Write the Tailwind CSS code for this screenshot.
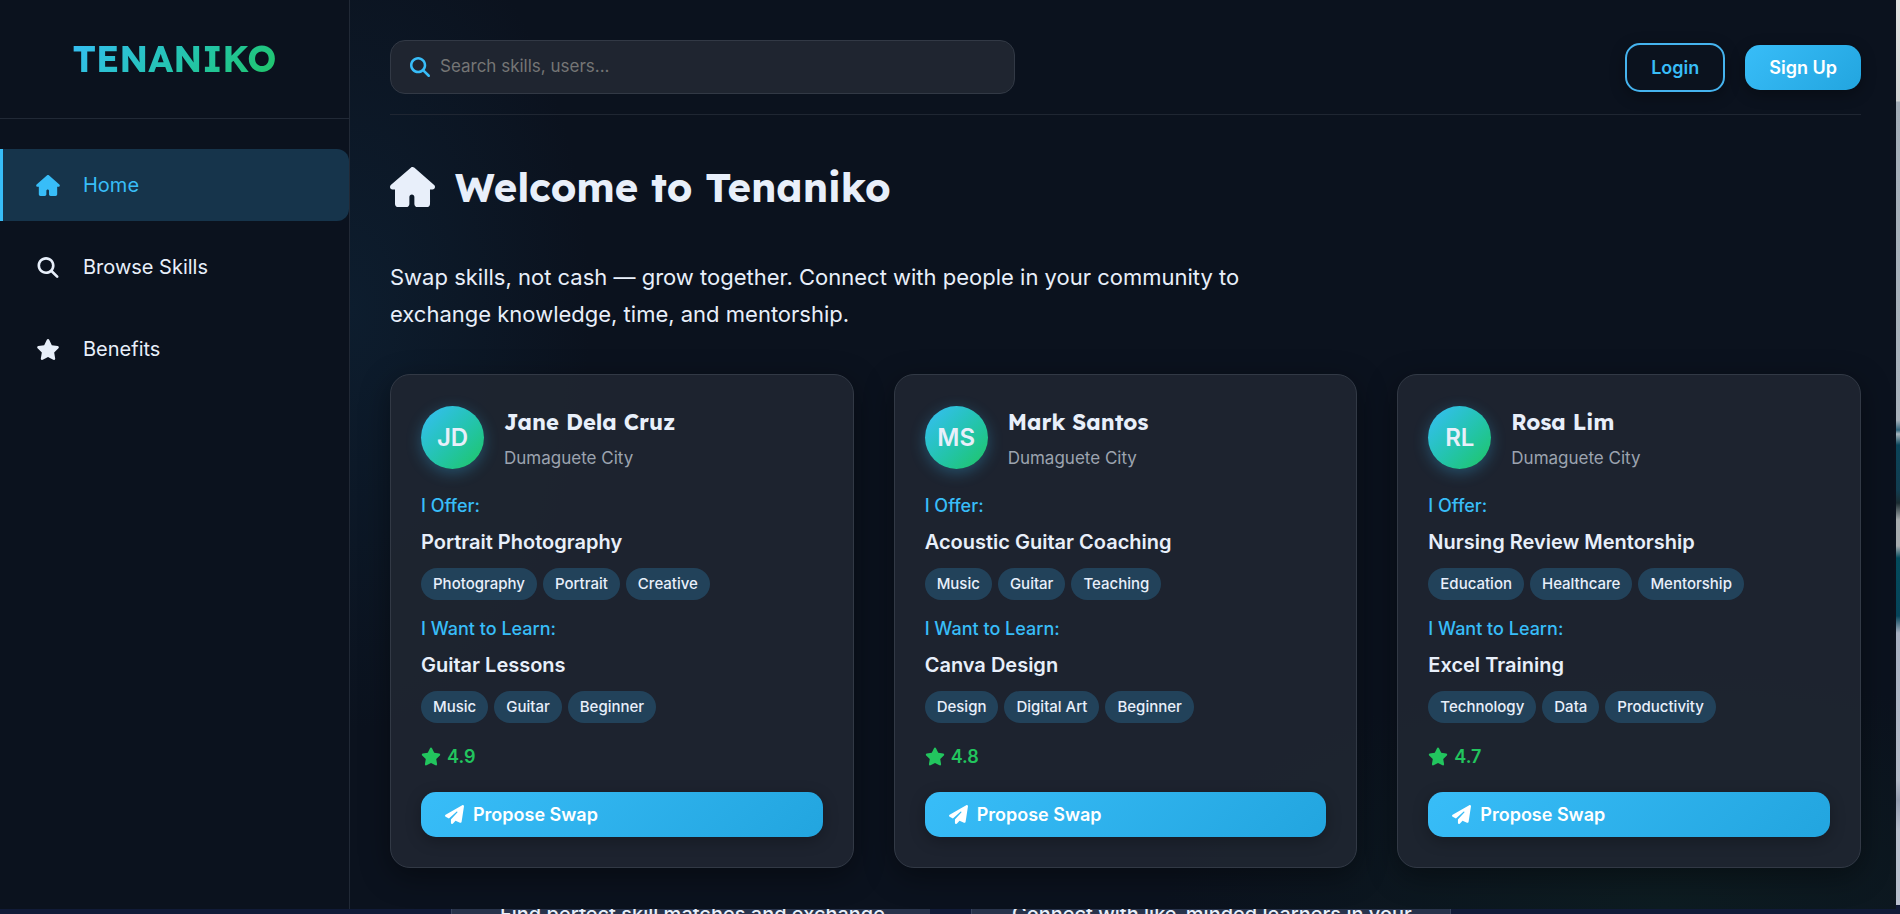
<!DOCTYPE html>
<html lang="en">
<head>
<meta charset="utf-8">
<meta name="viewport" content="width=device-width, initial-scale=1">
<title>Tenaniko</title>
<script src="https://cdn.jsdelivr.net/npm/@tailwindcss/browser@4"></script>
</head>
<body class="h-screen overflow-hidden bg-[#111b38] font-['Inter',sans-serif] text-[#e8effa]">
<svg class="hidden">
  <symbol id="home" viewBox="0 0 576 512"><path d="M575.8 255.5c0 18-15 32.1-32 32.1h-32l.7 160.2c0 2.700-.2 5.400-.5 8.100V472c0 22.100-17.900 40-40 40H352c-22.100 0-40-17.900-40-40v-88c0-17.700-14.300-32-32-32h16-16c-17.700 0-32 14.300-32 32v88c0 22.100-17.900 40-40 40H104c-22.100 0-40-17.900-40-40V287.600H32c-18 0-32-14-32-32.100 0-9 3-17 10-24L266.400 8c7-7 15-8 22-8s15 2 21 7l255.400 224.500c8 7 12 15 11 24z"/></symbol>
  <symbol id="search" viewBox="0 0 512 512"><path d="M416 208c0 45.900-14.900 88.300-40 122.700L502.600 457.400c12.500 12.500 12.500 32.800 0 45.300s-32.800 12.500-45.300 0L330.700 376c-34.400 25.200-76.800 40-122.700 40C93.100 416 0 322.900 0 208S93.100 0 208 0s208 93.100 208 208zM208 352a144 144 0 1 0 0-288 144 144 0 1 0 0 288z"/></symbol>
  <symbol id="star" viewBox="0 0 576 512"><path d="M316.900 18C311.600 7 300.400 0 288.100 0s-23.400 7-28.800 18L195 150.300 51.400 171.500c-12 1.800-22 10.200-25.700 21.700s-.7 24.200 7.900 32.700L137.800 329 113.200 474.700c-2 12 3 24.200 12.900 31.300s23 8 33.800 2.300l128.300-68.500 128.300 68.500c10.800 5.700 23.900 4.900 33.800-2.300s14.900-19.300 12.900-31.300L438.500 329 542.700 225.900c8.600-8.500 11.700-21.200 7.900-32.700s-13.700-19.900-25.700-21.700L381.200 150.300 316.900 18z"/></symbol>
  <symbol id="plane" viewBox="0 0 512 512"><path d="M498.100 5.600c10.100 7 15.400 19.100 13.500 31.200l-64 416c-1.500 9.700-7.400 18.200-16 23s-18.900 5.400-28 1.600L284 427.700l-68.500 74.100c-8.900 9.700-22.900 12.900-35.200 8.100S160 493.200 160 480v-83.600c0-4 1.500-7.800 4.200-10.700l167.600-182.900c5.800-6.300 5.600-16-.4-22s-15.700-6.400-22-.7L106 360.800 17.700 316.600C7.100 311.300.3 300.700 0 288.900s5.900-22.800 16.100-28.700l448-256c10.700-6.100 23.900-5.500 34 1.400z"/></symbol>
</svg>

<div class="flex h-full flex-col">
  <div class="flex min-h-0 flex-1">
    <aside class="w-[350px] shrink-0 border-r border-[#212936] bg-[#0b121e]">
      <div class="flex h-[119px] items-center justify-center border-b border-[#212936]">
        <a href="#" class="bg-linear-135 from-[#38bdf8] to-[#22c55e] bg-clip-text font-['Lexend','Inter',sans-serif] text-[36px] font-bold text-transparent">TENANIKO</a>
      </div>
      <nav class="flex flex-col gap-[10px] pt-[30px] text-[20px]">
        <a href="#" class="flex h-[72px] items-center gap-[23px] rounded-r-xl border-l-[3px] border-[#38bdf8] bg-[#16344b] pl-[33px] text-[#38bdf8]">
          <svg class="h-[21px] w-6 fill-current"><use href="#home"/></svg>Home</a>
        <a href="#" class="flex h-[72px] items-center gap-[23px] rounded-r-xl border-l-[3px] border-transparent pl-[33px]">
          <svg class="h-[21px] w-6 fill-current"><use href="#search"/></svg>Browse Skills</a>
        <a href="#" class="flex h-[72px] items-center gap-[23px] rounded-r-xl border-l-[3px] border-transparent pl-[33px]">
          <svg class="h-[21px] w-6 fill-current"><use href="#star"/></svg>Benefits</a>
      </nav>
    </aside>

    <main class="min-w-0 flex-1 bg-[#0b121e] bg-[radial-gradient(ellipse_240px_420px_at_0px_310px,#0d1d2e,transparent),radial-gradient(ellipse_500px_240px_at_85%_100%,#0d1c21,transparent)] pt-10 pr-[35px] pl-10">
      <header class="flex h-[75px] items-start justify-between border-b border-[#1f2632]">
        <label class="flex h-[54px] w-[625px] items-center gap-[10px] rounded-[15px] border border-[#323945] bg-[#1f2530] px-[19px]">
          <svg class="size-5 shrink-0 fill-[#38bdf8]"><use href="#search"/></svg>
          <input type="text" aria-label="Search" placeholder="Search skills, users..." class="min-w-0 flex-1 bg-transparent text-[17px] outline-none placeholder:text-[#757575]">
        </label>
        <div class="flex h-[54px] items-center gap-5 text-[18px] font-semibold">
          <button class="h-[49px] rounded-[15px] border-2 border-[#45b3ee] px-6 text-[#38bdf8] shadow-[0_4px_15px_#0005]">Login</button>
          <button class="h-[45px] rounded-[15px] bg-linear-135 from-[#38bdf8] to-[#22a5df] px-6 text-white shadow-[0_4px_15px_#0005]">Sign Up</button>
        </div>
      </header>

      <h1 class="mt-[47px] flex h-[50px] items-center gap-5 font-['Lexend','Inter',sans-serif] text-[40px] font-bold"><svg class="h-10 w-[45px] fill-current"><use href="#home"/></svg>Welcome to Tenaniko</h1>
      <p class="mt-[47px] max-w-[900px] text-[22px] leading-[37px]">Swap skills, not cash — grow together. Connect with people in your community to exchange knowledge, time, and mentorship.</p>

      <section id="cards" class="mt-[41px] grid grid-cols-3 gap-10"></section>
    </main>
    <div class="mb-1 w-1 shrink-0 bg-[linear-gradient(#e4e4e2_0px,#d2d4d4_101px,#a4aeb8_102px,#a9b3bc_420px,#31647b_430px,#a8b7bf_434px,#0a4459_445px,#123d50_490px,#1b2c31_503px,#a8adaf_520px,#a8adb0_546px,#034b5c_558px,#06445a_616px,#a8b1c2_633px,#b4bbc8_780px,#969fb1_800px,#b9c0ce_830px)]"></div>
  </div>

  <!-- Landing page panels that show under the dashboard -->
  <div class="flex h-[5px] shrink-0 gap-[41px] overflow-hidden pl-[451px] text-[20px] leading-[10px] font-medium whitespace-nowrap">
    <div class="w-[479px] border-l border-[#3a4660] bg-[#28334b] pl-12">Find perfect skill matches and exchange</div>
    <div class="w-[480px] border-x border-[#3a4660] bg-[#28334b] pl-10">Connect with like-minded learners in your</div>
  </div>
</div>

<template id="card">
  <article class="flex flex-col rounded-[20px] border border-[#323945] bg-[#1f2530]/95 px-[30px] pt-[31px] pb-[30px] shadow-[0_8px_30px_#0006]">
    <div class="flex h-[63px] items-center gap-5">
      <div data-f="initials" class="flex size-[63px] shrink-0 items-center justify-center rounded-full bg-linear-135 from-[#38bdf8] to-[#22c55e] text-[24px] font-semibold shadow-[0_4px_15px_#38bdf84d]"></div>
      <div class="pt-1">
        <h2 data-f="name" class="font-['Lexend','Inter',sans-serif] text-[22px] leading-[36px] font-bold"></h2>
        <p class="text-[17px] leading-[36px] text-[#9ca3af]">Dumaguete City</p>
      </div>
    </div>
    <h3 class="mt-5 text-[18px] leading-[34px] font-medium text-[#38bdf8]">I Offer:</h3>
    <p data-f="offer" class="text-[20px] leading-[38px] font-semibold"></p>
    <ul data-f="offerTags" class="mt-[7px] flex gap-[6px]"></ul>
    <h3 class="mt-3 text-[18px] leading-[34px] font-medium text-[#38bdf8]">I Want to Learn:</h3>
    <p data-f="want" class="text-[20px] leading-[38px] font-semibold"></p>
    <ul data-f="wantTags" class="mt-[7px] flex gap-[6px]"></ul>
    <div class="mt-4 flex h-[34px] items-center gap-[6px] text-[18px] font-semibold text-[#22c55e]"><svg class="h-[19px] w-5 fill-current"><use href="#star"/></svg><span data-f="rating"></span></div>
    <button class="mt-[19px] flex h-[45px] items-center gap-[9px] rounded-[15px] bg-linear-135 from-[#38bdf8] to-[#22a5df] px-6 text-[18px] font-semibold text-white shadow-[0_4px_15px_#0004]"><svg class="size-[19px] fill-current"><use href="#plane"/></svg>Propose Swap</button>
  </article>
</template>
<script>
const people = [
  {initials:'JD', name:'Jane Dela Cruz', offer:'Portrait Photography', offerTags:['Photography','Portrait','Creative'], want:'Guitar Lessons', wantTags:['Music','Guitar','Beginner'], rating:'4.9'},
  {initials:'MS', name:'Mark Santos', offer:'Acoustic Guitar Coaching', offerTags:['Music','Guitar','Teaching'], want:'Canva Design', wantTags:['Design','Digital Art','Beginner'], rating:'4.8'},
  {initials:'RL', name:'Rosa Lim', offer:'Nursing Review Mentorship', offerTags:['Education','Healthcare','Mentorship'], want:'Excel Training', wantTags:['Technology','Data','Productivity'], rating:'4.7'}
];
for (const p of people) {
  const c = document.getElementById('card').content.cloneNode(true);
  c.querySelectorAll('[data-f]').forEach(e => {
    const v = p[e.dataset.f];
    if (Array.isArray(v)) e.innerHTML = v.map(t => `<li class="h-8 rounded-full bg-[#22425a] px-3 text-[15px] leading-8 font-medium whitespace-nowrap">${t}</li>`).join('');
    else e.textContent = v;
  });
  document.getElementById('cards').append(c);
}
</script>
</body>
</html>
